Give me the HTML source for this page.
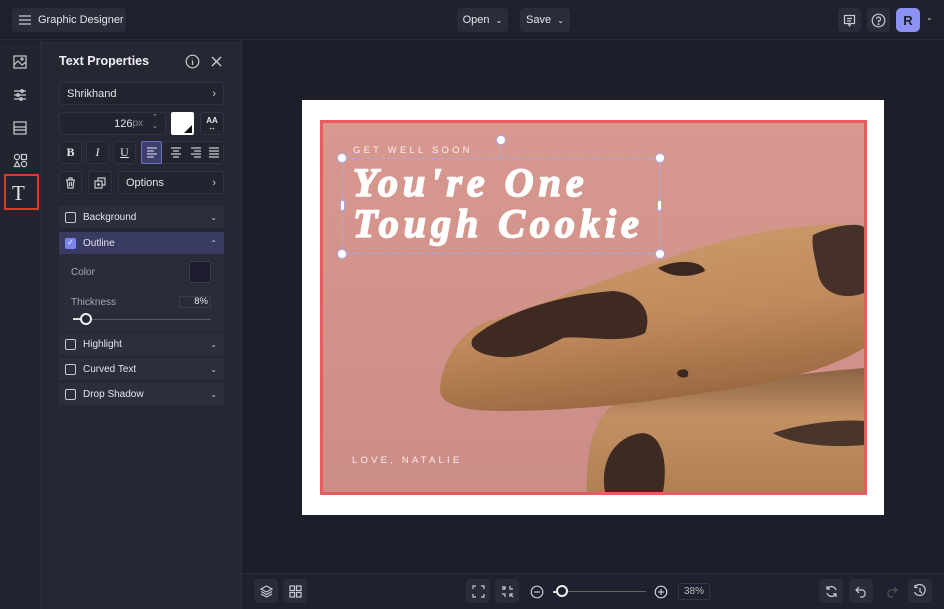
<!DOCTYPE html>
<html><head><meta charset="utf-8"><style>
*{box-sizing:border-box;margin:0;padding:0}
body{width:944px;height:609px;background:#1c1e29;font-family:"Liberation Sans",sans-serif;color:#e4e5ec;position:relative;overflow:hidden;font-size:11px}
.abs{position:absolute}
.top{left:0;top:0;width:944px;height:40px;background:#1e202c;border-bottom:1px solid #2c2e3b}
.btn{position:absolute;background:#2a2c39;border-radius:4px;display:flex;align-items:center;justify-content:center;color:#e4e5ec;font-size:11px}
.rail{left:0;top:41px;width:41px;height:568px;background:#22242f;border-right:1px solid #2c2e3b}
.panel{left:41px;top:41px;width:201px;height:568px;background:#252733;border-right:1px solid #2f3140}
.fld{position:absolute;background:#22242f;border:1px solid #31333f;border-radius:3px;display:flex;align-items:center;font-size:11px}
.row{position:absolute;left:59px;width:165px;height:23px;background:#2c2e3b;display:flex;align-items:center;font-size:10px}
.cb{width:11px;height:11px;border:1.3px solid #c8c9d2;border-radius:2px;margin:0 7px 0 6px}
.chev{position:absolute;right:7px;font-size:8px;color:#ccc}
.bottom{left:242px;top:573px;width:702px;height:36px;background:#1f2130;border-top:1px solid #2c2e3b}
.ic{stroke:#c9cad3;fill:none;stroke-width:1.2}
</style></head><body>
<div class="abs top">
 <div class="btn" style="left:12px;top:8px;width:114px;height:24px;justify-content:flex-start;padding-left:6px">
  <svg width="14" height="12" class="ic"><path d="M1 2H13M1 6H13M1 10H13"/></svg><span style="margin-left:6px">Graphic Designer</span></div>
 <div class="btn" style="left:457px;top:8px;width:51px;height:24px">Open &nbsp;<span style="font-size:8px">⌄</span></div>
 <div class="btn" style="left:520px;top:8px;width:50px;height:24px">Save &nbsp;<span style="font-size:8px">⌄</span></div>
 <div class="btn" style="left:838px;top:8px;width:23px;height:24px"><svg width="13" height="13" class="ic"><rect x="1.5" y="1.5" width="10" height="8"/><path d="M4 4.5H9M4 7H8M5 9.5L6.5 12L8 9.5"/></svg></div>
 <div class="btn" style="left:867px;top:8px;width:23px;height:24px"><svg width="15" height="15" class="ic"><circle cx="7.5" cy="7.5" r="6.3"/><path d="M5.5 6a2 2 0 1 1 2 2v1.5"/><circle cx="7.5" cy="11.2" r=".4"/></svg></div>
 <div class="btn" style="left:896px;top:8px;width:24px;height:24px;background:#8c93f5;color:#1c1e29;font-weight:bold;font-size:13px;border-radius:5px">R</div>
 <div class="abs" style="left:926px;top:13px;font-size:8px;color:#ccc">⌄</div>
</div>
<div class="abs rail">
 <svg class="abs ic" style="left:13px;top:14px" width="14" height="14"><rect x="1" y="1" width="12" height="12"/><path d="M1 10L5 6L9 10L13 7"/><circle cx="9" cy="4" r="1"/></svg>
 <svg class="abs ic" style="left:13px;top:47px" width="14" height="14"><path d="M1 3H13M1 7H13M1 11H13"/><circle cx="9" cy="3" r="1.3"/><circle cx="5" cy="7" r="1.3"/><circle cx="8" cy="11" r="1.3"/></svg>
 <svg class="abs ic" style="left:13px;top:80px" width="14" height="14"><rect x="1" y="1" width="12" height="12"/><path d="M1 6H13M1 9H13"/></svg>
 <svg class="abs ic" style="left:13px;top:112px" width="15" height="15"><circle cx="4" cy="4" r="2.6"/><rect x="8.5" y="1.5" width="5" height="5"/><path d="M4 8.5L6.7 13.5H1.3Z"/><circle cx="11" cy="11" r="2.6"/></svg>
 <div class="abs" style="left:4px;top:133px;width:35px;height:36px;border:2px solid #e0382a"></div>
 <div class="abs" style="left:12px;top:140px;font-family:'Liberation Serif',serif;font-size:21px;color:#e4e5ec">T</div>
</div>
<div class="abs panel"></div>
<div class="abs" style="left:59px;top:54px;font-size:12.5px;font-weight:bold;color:#f0f0f5">Text Properties</div>
<svg class="abs ic" style="left:185px;top:54px" width="15" height="15"><circle cx="7.5" cy="7.5" r="6.3"/><path d="M7.5 6.5V11M7.5 4.2V4.6"/></svg>
<svg class="abs ic" style="left:211px;top:56px" width="11" height="11"><path d="M1 1L10 10M10 1L1 10" stroke-width="1.4"/></svg>
<div class="fld" style="left:59px;top:82px;width:165px;height:23px;padding-left:7px">Shrikhand<span class="chev" style="font-size:11px">›</span></div>
<div class="fld" style="left:59px;top:112px;width:107px;height:23px;justify-content:flex-end;padding-right:22px">126<span style="color:#888;font-size:10px">px</span></div>
<div class="abs" style="left:152px;top:113px;font-size:7px;color:#aaa;line-height:9px">⌃<br>⌄</div>
<div class="abs" style="left:171px;top:112px;width:23px;height:23px;background:#fff;border-radius:2px"><div class="abs" style="right:2px;bottom:2px;width:0;height:0;border-left:8px solid transparent;border-bottom:8px solid #111"></div></div>
<div class="fld" style="left:200px;top:112px;width:24px;height:23px;justify-content:center;font-size:8px;font-weight:bold;line-height:7px;text-align:center">AA<br>↔</div>
<div class="fld" style="left:59px;top:141px;width:23px;height:23px;justify-content:center;font-weight:bold;font-family:'Liberation Serif',serif;font-size:12px">B</div>
<div class="fld" style="left:86px;top:141px;width:23px;height:23px;justify-content:center;font-style:italic;font-family:'Liberation Serif',serif;font-size:12px">I</div>
<div class="fld" style="left:113px;top:141px;width:23px;height:23px;justify-content:center;text-decoration:underline;font-family:'Liberation Serif',serif;font-size:12px">U</div>
<div class="fld" style="left:141px;top:141px;width:83px;height:23px"></div>
<div class="abs" style="left:141px;top:141px;width:21px;height:23px;background:#3e3f6e;border:1px solid #6b6fc0;border-radius:2px"></div>
<svg class="abs ic" style="left:145px;top:146px" width="76" height="13"><path d="M2 2H12M2 5H9M2 8H12M2 11H9"/><path d="M26 2H36M28 5H34M26 8H36M28 11H34"/><path d="M46 2H56M49 5H56M46 8H56M49 11H56"/><path d="M64 2H74M64 5H74M64 8H74M64 11H74"/></svg>
<div class="fld" style="left:59px;top:171px;width:23px;height:23px;justify-content:center"><svg width="11" height="12" class="ic"><path d="M1 3H10M4 3V1H7V3M2 3L3 11H8L9 3M4.5 5V9M6.5 5V9"/></svg></div>
<div class="fld" style="left:88px;top:171px;width:24px;height:23px;justify-content:center"><svg width="12" height="12" class="ic"><rect x="1" y="4" width="7" height="7"/><path d="M4 4V1H11V8H8M4.5 6V9M3 7.5H6"/></svg></div>
<div class="fld" style="left:118px;top:171px;width:106px;height:23px;padding-left:7px">Options<span class="chev" style="font-size:11px">›</span></div>
<div class="row" style="top:206px;height:22px"><span class="cb"></span>Background<span class="chev">⌄</span></div>
<div class="row" style="top:232px;height:22px;background:#3a3b63"><span class="cb" style="background:#7b84ee;border-color:#7b84ee;color:#fff;font-size:8px;line-height:8px;text-align:center">✓</span>Outline<span class="chev">⌃</span></div>
<div class="abs" style="left:59px;top:254px;width:165px;height:78px;background:#2a2c38"></div>
<div class="abs" style="left:71px;top:267px;font-size:10px;color:#a6a8b4">Color</div>
<div class="abs" style="left:189px;top:261px;width:22px;height:22px;background:#1e1c2e;border:1px solid #3a3a48;border-radius:2px"></div>
<div class="abs" style="left:71px;top:297px;font-size:10px;color:#a6a8b4">Thickness</div>
<div class="abs" style="left:179px;top:296px;width:32px;height:12px;border:1px solid #3a3c48;font-size:9.5px;text-align:right;padding-right:2px;line-height:10px">8%</div>
<div class="abs" style="left:73px;top:319px;width:138px;height:1px;background:#555766"></div>
<div class="abs" style="left:73px;top:318px;width:12px;height:2px;background:#ddd"></div>
<div class="abs" style="left:80px;top:313px;width:12px;height:12px;border-radius:50%;background:#252733;border:2px solid #eee"></div>
<div class="row" style="top:333px;height:22px"><span class="cb"></span>Highlight<span class="chev">⌄</span></div>
<div class="row" style="top:358px;height:22px"><span class="cb"></span>Curved Text<span class="chev">⌄</span></div>
<div class="row" style="top:383px;height:22px"><span class="cb"></span>Drop Shadow<span class="chev">⌄</span></div>

<!-- canvas -->
<div class="abs" style="left:302px;top:100px;width:582px;height:415px;background:#fff"></div>
<div class="abs" style="left:320px;top:120px;width:547px;height:375px;border:3px solid #ea5b5e;background:#d6978f;overflow:hidden">
<svg width="541" height="369" style="position:absolute;left:0;top:0">
<defs>
<linearGradient id="c1" x1="0" y1="0" x2="0.3" y2="1"><stop offset="0" stop-color="#cf9f70"/><stop offset=".6" stop-color="#c08a5c"/><stop offset="1" stop-color="#9c6a42"/></linearGradient>
<linearGradient id="c2" x1="0" y1="0" x2="0" y2="1"><stop offset="0" stop-color="#8a6344"/><stop offset=".4" stop-color="#c19063"/><stop offset="1" stop-color="#b08052"/></linearGradient>
<linearGradient id="sh" x1="0" y1="0" x2="0" y2="1"><stop offset="0" stop-color="#d7988f"/><stop offset="1" stop-color="#cc8d87"/></linearGradient>
</defs>
<rect width="541" height="369" fill="url(#sh)"/>
<path d="M264 369 C262 320 275 285 300 277 C400 260 480 250 541 245 L541 369Z" fill="url(#c2)"/>
<path d="M282 369 C276 335 295 312 320 310 C340 312 345 340 340 369Z" fill="#3d2a22"/>
<path d="M450 310 C480 300 520 296 541 298 L541 322 C510 325 470 322 450 310Z" fill="#4a352b"/>
<path d="M117 267 C118 240 135 212 160 200 C240 175 320 140 400 118 C470 100 520 100 541 103 L541 225 C500 250 440 262 380 270 C320 280 250 288 180 288 C140 288 118 282 117 267Z" fill="url(#c1)"/>
<path d="M150 215 C170 195 230 172 290 168 C318 170 330 190 322 210 C300 222 260 212 240 215 C220 225 195 240 165 232 C150 228 146 222 150 215Z" fill="#3e2a22"/>
<path d="M335 145 C355 135 380 138 382 148 C368 155 348 155 335 145Z" fill="#3a2720"/>
<path d="M490 112 C515 100 541 100 541 105 L541 170 C520 178 498 170 495 150 C492 135 488 122 490 112Z" fill="#46312a"/>
<path d="M355 248 C362 244 368 248 364 254 C358 256 352 252 355 248Z" fill="#3a2720"/>
</svg>
</div>
<div class="abs" style="left:353px;top:145px;font-size:9.5px;letter-spacing:3.2px;color:#fbeeee">GET WELL SOON</div>
<div class="abs" style="left:353px;top:162px;font-family:'Liberation Serif',serif;font-weight:bold;font-style:italic;font-size:40px;line-height:41px;letter-spacing:5px;color:#fff;-webkit-text-stroke:1.6px #fff;white-space:nowrap">You're One<br>Tough Cookie</div>
<div class="abs" style="left:352px;top:455px;font-size:9.5px;letter-spacing:3.2px;color:#fbeeee">LOVE, NATALIE</div>
<div class="abs" style="left:342px;top:158px;width:318px;height:96px;border:1.5px dashed #a8a8ef"></div>
<div class="abs" style="left:500px;top:141px;width:0;height:17px;border-left:1.5px dashed #a8a8ef"></div>
<div class="abs" style="left:496px;top:135px;width:10px;height:10px;border-radius:50%;background:#fff;border:1.5px solid #a8a8ef"></div>
<div class="abs" style="left:337px;top:153px;width:10px;height:10px;border-radius:50%;background:#fff;border:1.5px solid #a8a8ef"></div>
<div class="abs" style="left:655px;top:153px;width:10px;height:10px;border-radius:50%;background:#fff;border:1.5px solid #a8a8ef"></div>
<div class="abs" style="left:337px;top:249px;width:10px;height:10px;border-radius:50%;background:#fff;border:1.5px solid #a8a8ef"></div>
<div class="abs" style="left:655px;top:249px;width:10px;height:10px;border-radius:50%;background:#fff;border:1.5px solid #a8a8ef"></div>
<div class="abs" style="left:340px;top:200px;width:5px;height:11px;border-radius:2px;background:#fff;border:1px solid #a8a8ef"></div>
<div class="abs" style="left:657px;top:200px;width:5px;height:11px;border-radius:2px;background:#fff;border:1px solid #a8a8ef"></div>

<div class="abs bottom"></div>
<div class="btn" style="left:254px;top:579px;width:24px;height:24px"><svg width="13" height="13" class="ic"><path d="M6.5 1L12 4L6.5 7L1 4Z M1 6.5L6.5 9.5L12 6.5M1 9L6.5 12L12 9"/></svg></div>
<div class="btn" style="left:283px;top:579px;width:24px;height:24px"><svg width="13" height="13" class="ic"><rect x="1" y="1" width="4.5" height="4.5"/><rect x="7.5" y="1" width="4.5" height="4.5"/><rect x="1" y="7.5" width="4.5" height="4.5"/><rect x="7.5" y="7.5" width="4.5" height="4.5"/></svg></div>
<div class="btn" style="left:466px;top:579px;width:24px;height:24px"><svg width="13" height="13" class="ic"><path d="M1 4V1H4M9 1H12V4M12 9V12H9M4 12H1V9"/></svg></div>
<div class="btn" style="left:495px;top:579px;width:24px;height:24px"><svg width="13" height="13" class="ic"><path d="M1 4H4V1M9 1V4H12M12 9H9V12M4 12V9H1M4 4L1 1M9 9L12 12"/></svg></div>
<svg class="abs ic" style="left:530px;top:585px" width="14" height="14"><circle cx="7" cy="7" r="5.8"/><path d="M4 7H10"/></svg>
<div class="abs" style="left:562px;top:591px;width:84px;height:1px;background:#666"></div>
<div class="abs" style="left:553px;top:591px;width:8px;height:1.5px;background:#ddd"></div>
<div class="abs" style="left:556px;top:585px;width:12px;height:12px;border-radius:50%;background:#1f2130;border:2px solid #eee"></div>
<svg class="abs ic" style="left:654px;top:585px" width="14" height="14"><circle cx="7" cy="7" r="5.8"/><path d="M4 7H10M7 4V10"/></svg>
<div class="abs" style="left:678px;top:583px;width:32px;height:17px;border:1px solid #343643;border-radius:2px;font-size:10px;color:#bbb;text-align:center;line-height:15px">38%</div>
<div class="btn" style="left:819px;top:579px;width:24px;height:24px"><svg width="13" height="13" class="ic"><path d="M11 5A5 5 0 0 0 2 4M2 1V4H5M2 8A5 5 0 0 0 11 9M11 12V9H8"/></svg></div>
<div class="btn" style="left:849px;top:579px;width:24px;height:24px"><svg width="13" height="13" class="ic"><path d="M4 2L1 5L4 8M1 5H8A4 4 0 0 1 8 12H5"/></svg></div>
<div class="btn" style="left:879px;top:579px;width:24px;height:24px;background:#1f2130"><svg width="13" height="13" class="ic" style="stroke:#555"><path d="M9 2L12 5L9 8M12 5H5A4 4 0 0 0 5 12H8"/></svg></div>
<div class="btn" style="left:908px;top:579px;width:24px;height:24px"><svg width="14" height="14" class="ic"><path d="M2 3A5.5 5.5 0 1 1 1.5 8M2 1V3.5H4.5M7 4V7.5L9 9"/></svg></div>
</body></html>
